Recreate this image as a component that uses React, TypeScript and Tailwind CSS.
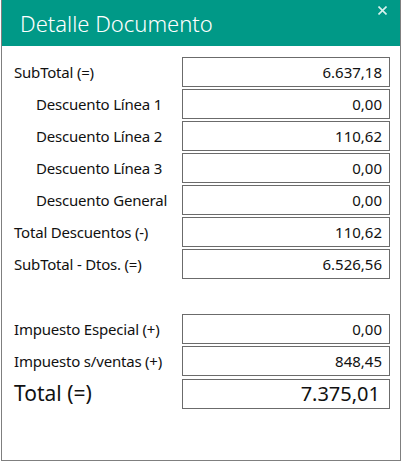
import React from 'react'

type Row = { label: string; value: string; indent?: boolean }

const topRows: Row[] = [
  { label: 'SubTotal (=)', value: '6.637,18' },
  { label: 'Descuento Línea 1', value: '0,00', indent: true },
  { label: 'Descuento Línea 2', value: '110,62', indent: true },
  { label: 'Descuento Línea 3', value: '0,00', indent: true },
  { label: 'Descuento General', value: '0,00', indent: true },
  { label: 'Total Descuentos (-)', value: '110,62' },
  { label: 'SubTotal - Dtos. (=)', value: '6.526,56' },
]

const taxRows: Row[] = [
  { label: 'Impuesto Especial (+)', value: '0,00' },
  { label: 'Impuesto s/ventas (+)', value: '848,45' },
]

function FieldRow({ label, value, indent }: Row) {
  return (
    <div className="flex h-[30px] items-center">
      <div className={`w-[168px] text-[15px] tracking-[-0.2px] text-[#111] ${indent ? 'pl-[22px]' : ''}`}>
        {label}
      </div>
      <div className="flex h-[30px] w-[208px] items-center justify-end border border-[#6b6b6b] pr-[7px] text-[15px] text-[#111]">
        {value}
      </div>
    </div>
  )
}

export default function App() {
  return (
    <div className="h-[462px] w-[402px] bg-white" style={{ fontFamily: '"Noto Sans", "Open Sans", sans-serif' }}>
      <div className="ml-[1px] flex h-[461px] w-[400px] flex-col border-x border-b border-[#7f7f7f]">
        {/* Header */}
        <div className="relative flex h-[46px] shrink-0 items-center bg-[#009987] pl-[18px]">
          <h1 className="text-[22px] font-light text-white">Detalle Documento</h1>
          <svg
            className="absolute right-[13px] top-[6px]"
            width="9"
            height="9"
            viewBox="0 0 9 9"
            fill="none"
            stroke="#d8f2ee"
            strokeWidth="1.6"
          >
            <path d="M0.5 0.5 L8.5 8.5 M8.5 0.5 L0.5 8.5" />
          </svg>
        </div>

        {/* Body */}
        <div className="flex flex-col pl-[12px] pt-[11px]">
          <div className="flex flex-col gap-[2px]">
            {topRows.map((r) => (
              <FieldRow key={r.label} {...r} />
            ))}
          </div>

          <div className="mt-[35px] flex flex-col gap-[2px]">
            {taxRows.map((r) => (
              <FieldRow key={r.label} {...r} />
            ))}
            <div className="mt-[1px] flex h-[30px] items-center">
              <div className="w-[168px] text-[21px] text-[#111]">Total (=)</div>
              <div className="flex h-[30px] w-[208px] items-center justify-end border border-[#6b6b6b] pr-[9px] text-[20px] text-[#111]">
                7.375,01
              </div>
            </div>
          </div>
        </div>
      </div>
    </div>
  )
}
